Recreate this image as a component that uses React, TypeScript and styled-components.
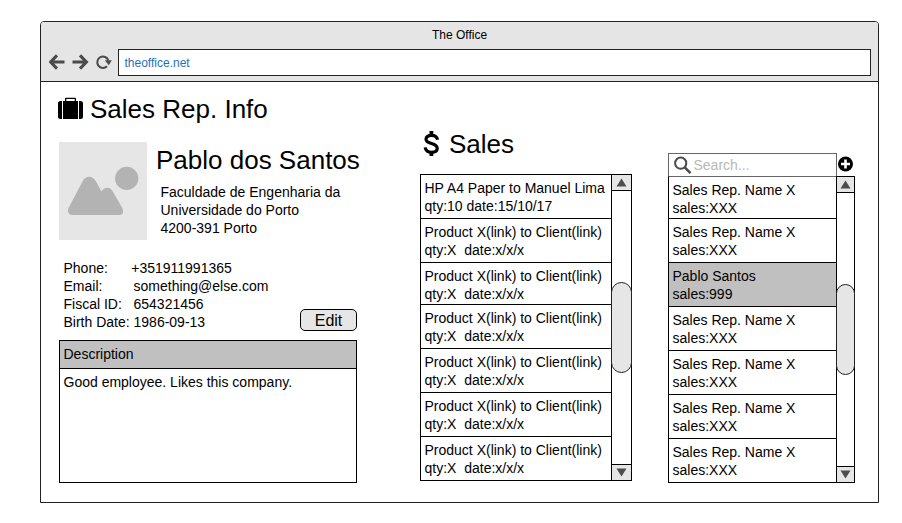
import React from "react";
import styled, { createGlobalStyle } from "styled-components";

const GlobalStyle = createGlobalStyle`
  * { box-sizing: border-box; }
  body {
    margin: 0;
    background: #fff;
    color: #000;
    font: 14px/18px "Liberation Sans", Arial, sans-serif;
    overflow: hidden;
  }
  svg { display: block; flex: none; }
`;

const Page = styled.div`
  padding: 21px 0 0 40px;
  height: 523px;
`;

const BrowserWindow = styled.main`
  width: 839px;
  height: 482px;
  border: 1px solid #222;
  border-radius: 4px 4px 0 0;
  overflow: hidden;
`;

const Chrome = styled.header`
  height: 60px;
  background: #e5e5e5;
  border-bottom: 1px solid #222;
`;

const WindowTitle = styled.div`
  height: 27px;
  line-height: 26px;
  font-size: 12px;
  text-align: center;
`;

const Toolbar = styled.nav`
  display: flex;
  align-items: center;
  height: 27px;
  padding: 0 7px 0 8px;
`;

const NavIcons = styled.div`
  display: flex;
  width: 69px;
  flex: none;
`;

const AddressBar = styled.div`
  flex: 1;
  height: 27px;
  border: 1px solid #222;
  background: #fff;
  color: #1f70c1;
  font-size: 12px;
  line-height: 26px;
  padding-left: 5.5px;
`;

const Body = styled.div`
  display: flex;
  height: 420px;
  padding-left: 18px;
`;

const Profile = styled.section`
  width: 298px;
  margin-right: 63px;
  padding-top: 12px;
  flex: none;
`;

const SalesColumn = styled.section`
  width: 212px;
  margin-right: 36px;
  padding-top: 47px;
  flex: none;
`;

const RepsColumn = styled.section`
  width: 187px;
  padding-top: 71px;
  flex: none;
`;

const Heading = styled.h1<{ $gap: number; $indent: number }>`
  display: flex;
  align-items: center;
  gap: ${(p) => p.$gap}px;
  margin: 0 0 0 ${(p) => p.$indent}px;
  height: 30px;
  font-size: 26px;
  font-weight: 400;
  line-height: 30px;
  white-space: nowrap;
`;

const Identity = styled.div`
  display: flex;
  gap: 9px;
  height: 98px;
  margin-top: 18px;
`;

const PersonName = styled.h2`
  margin: 3px 0 8px;
  font-size: 26px;
  font-weight: 400;
  line-height: 30px;
  white-space: nowrap;
`;

const Address = styled.div`
  padding-left: 4.5px;
  white-space: pre;
`;

const ContactRow = styled.div`
  display: flex;
  justify-content: space-between;
  align-items: flex-end;
  height: 91px;
`;

const Contact = styled.div`
  align-self: flex-start;
  width: 230px;
  margin-top: 19px;
  padding-left: 4.5px;
  white-space: pre;
`;

const EditButton = styled.button`
  width: 57px;
  height: 22px;
  padding: 1px 0 0;
  border: 1px solid #000;
  border-radius: 5px;
  background: #e6e6e6;
  font: 16px/19px "Liberation Sans", Arial, sans-serif;
  color: #000;
`;

const Description = styled.div`
  height: 143px;
  margin-top: 9px;
  border: 1px solid #000;
`;

const DescriptionTitle = styled.div`
  height: 28px;
  line-height: 26px;
  padding-left: 3.5px;
  background: #c0c0c0;
  border-bottom: 1px solid #000;
`;

const DescriptionText = styled.p`
  margin: 0;
  padding: 4px 3.5px;
`;

const ListFrame = styled.div<{ $height: number; $top: number }>`
  display: flex;
  height: ${(p) => p.$height}px;
  margin-top: ${(p) => p.$top}px;
`;

const Rows = styled.ul<{ $grayTop?: boolean }>`
  flex: 1;
  margin: 0;
  padding: 0;
  list-style: none;
  border: 1px solid #000;
  border-width: 1px 0 0 1px;
  border-top-color: ${(p) => (p.$grayTop ? "#666" : "#000")};
`;

const Row = styled.li<{ $short?: boolean; $selected?: boolean }>`
  height: ${(p) => (p.$short ? 42 : 44)}px;
  padding: 4px 0 0 3.5px;
  border-bottom: 1px solid #000;
  background: ${(p) => (p.$selected ? "#c0c0c0" : "transparent")};
  white-space: pre;
`;

const Track = styled.div<{ $width: number }>`
  display: flex;
  flex-direction: column;
  width: ${(p) => p.$width}px;
  border: 1px solid #000;
`;

const ScrollButton = styled.div<{ $down?: boolean }>`
  display: flex;
  justify-content: center;
  align-items: center;
  height: 16px;
  background: #e6e6e6;
  border: 0 solid #000;
  border-width: ${(p) => (p.$down ? "1px 0 0" : "0 0 1px")};
`;

const Thumb = styled.div`
  height: 91px;
  margin: 91px -1px auto;
  border: 1px solid #222;
  border-radius: 11px;
  background: #e6e6e6;
`;

const SearchRow = styled.div`
  display: flex;
  height: 23px;
`;

const SearchBox = styled.div`
  display: flex;
  width: 169px;
  padding-left: 5px;
  border: 1px solid #666;
  border-bottom: 0;
  color: #b8b8b8;
  line-height: 22px;
`;

const SearchHint = styled.span`
  padding-left: 1.5px;
`;

const AddButton = styled.div`
  padding-top: 3px;
`;

const Arrow = ({ down }: { down?: boolean }) => (
  <svg width="11" height="9" viewBox="0 0 11 9">
    <path d={down ? "M.5 .5h10L5.5 8.5z" : "M.5 8.5h10L5.5 .5z"} fill="#4d4d4d" />
  </svg>
);

const ScrollBar = ({ width }: { width: number }) => (
  <Track $width={width}>
    <ScrollButton><Arrow /></ScrollButton>
    <Thumb />
    <ScrollButton $down><Arrow down /></ScrollButton>
  </Track>
);

const NavigationIcons = () => (
  <NavIcons>
    <svg width="69" height="27" viewBox="49 49 69 27" fill="none" stroke="#4b4b4b">
      <path d="M51 62H64.5M57 55.4L50.600 62l6.400 6.600" strokeWidth="3.100" />
      <path d="M72.500 62H86M80 55.400L86.400 62l-6.400 6.600" strokeWidth="3.100" />
      <path d="M107 66.300A5.700 5.700 0 1 1 108.400 60.500" strokeWidth="2" />
      <path d="M104.800 60.300h7l-3 5z" fill="#4b4b4b" stroke="none" />
    </svg>
  </NavIcons>
);

const SuitcaseIcon = () => (
  <svg width="25" height="24" viewBox="0 0 25 24">
    <path d="M4 4v18H2.500Q0 22 0 19.500v-13Q0 4 2.500 4zM21 4v18h1.500Q25 22 25 19.500v-13Q25 4 22.500 4z" />
    <path fillRule="evenodd" d="M5 22V4h2V1.700Q7 .7 8 .7h9Q18 .7 18 1.700V4h2v18zM8.300 4h8.400V2H8.300z" />
  </svg>
);

const DollarIcon = () => (
  <svg width="17" height="26" viewBox="0 0 17 26">
    <path d="M6.500 0h3.800v4H6.500zM6.500 21.500h3.800V25H6.500z" />
    <path
      d="M14.600 8.800C14 5.800 12 4.300 8.600 4.300c-3.400 0-5.600 1.500-5.600 4 0 2.600 2.200 3.300 5.500 4.200 3.600 1 5.700 1.900 5.700 4.700 0 2.700-2.200 4.100-5.600 4.100-3.700 0-6-1.600-6.400-4.900"
      fill="none"
      stroke="#000"
      strokeWidth="3.200"
    />
  </svg>
);

const PicturePlaceholder = () => (
  <svg width="88" height="98" viewBox="0 0 88 98">
    <path fill="#e6e6e6" d="M0 0h88v98H0z" />
    <g fill="#b3b3b3">
      <circle cx="67.700" cy="36.400" r="11.600" />
      <path d="M14 73C9.500 73 7.800 69.500 9.800 65.500L23.500 39.500C26.500 33.300 33.500 33.300 37 39.500L42.500 49.500C45.500 45 50.500 44.500 53.500 49L63 65.500C65 69.500 64.500 73 60 73z" />
    </g>
  </svg>
);

const SearchIcon = () => (
  <svg width="18" height="22" viewBox="0 0 18 22" fill="none" stroke="#4b4b4b">
    <circle cx="6.700" cy="9.200" r="5.600" strokeWidth="2" />
    <path d="M10.700 13.400l5.800 5.800" strokeWidth="2.600" />
  </svg>
);

const AddIcon = () => (
  <svg width="17" height="17" viewBox="0 0 17 17">
    <circle cx="8.500" cy="8" r="7.500" />
    <path d="M4 8h9M8.500 3.500v9" stroke="#fff" strokeWidth="2.600" />
  </svg>
);

const placeholderSale = "Product X(link) to Client(link)\nqty:X  date:x/x/x";
const placeholderRep = "Sales Rep. Name X\nsales:XXX";

const sales = [
  { text: "HP A4 Paper to Manuel Lima\nqty:10 date:15/10/17" },
  { text: placeholderSale },
  { text: placeholderSale, short: true },
  { text: placeholderSale },
  { text: placeholderSale },
  { text: placeholderSale },
  { text: placeholderSale },
];

const reps = [
  { text: placeholderRep, short: true },
  { text: placeholderRep },
  { text: "Pablo Santos\nsales:999", selected: true },
  { text: placeholderRep },
  { text: placeholderRep },
  { text: placeholderRep },
  { text: placeholderRep },
];

const contactText = [
  "Phone:      +351911991365",
  "Email:        something@else.com",
  "Fiscal ID:   654321456",
  "Birth Date: 1986-09-13",
].join("\n");

export default function App() {
  return (
    <Page>
      <GlobalStyle />
      <BrowserWindow>
        <Chrome>
          <WindowTitle>The Office</WindowTitle>
          <Toolbar>
            <NavigationIcons />
            <AddressBar>theoffice.net</AddressBar>
          </Toolbar>
        </Chrome>
        <Body>
          <Profile>
            <Heading $gap={7} $indent={-1}><SuitcaseIcon />Sales Rep. Info</Heading>
            <Identity>
              <PicturePlaceholder />
              <div>
                <PersonName>Pablo dos Santos</PersonName>
                <Address>{"Faculdade de Engenharia da\nUniversidade do Porto\n4200-391 Porto"}</Address>
              </div>
            </Identity>
            <ContactRow>
              <Contact>{contactText}</Contact>
              <EditButton>Edit</EditButton>
            </ContactRow>
            <Description>
              <DescriptionTitle>Description</DescriptionTitle>
              <DescriptionText>Good employee. Likes this company.</DescriptionText>
            </Description>
          </Profile>
          <SalesColumn>
            <Heading $gap={9} $indent={3}><DollarIcon />Sales</Heading>
            <ListFrame $height={307} $top={15}>
              <Rows>
                {sales.map((s, i) => <Row key={i} $short={s.short}>{s.text}</Row>)}
              </Rows>
              <ScrollBar width={21} />
            </ListFrame>
          </SalesColumn>
          <RepsColumn>
            <SearchRow>
              <SearchBox><SearchIcon /><SearchHint>Search...</SearchHint></SearchBox>
              <AddButton><AddIcon /></AddButton>
            </SearchRow>
            <ListFrame $height={307} $top={0}>
              <Rows $grayTop>
                {reps.map((r, i) => <Row key={i} $short={r.short} $selected={r.selected}>{r.text}</Row>)}
              </Rows>
              <ScrollBar width={19} />
            </ListFrame>
          </RepsColumn>
        </Body>
      </BrowserWindow>
    </Page>
  );
}
